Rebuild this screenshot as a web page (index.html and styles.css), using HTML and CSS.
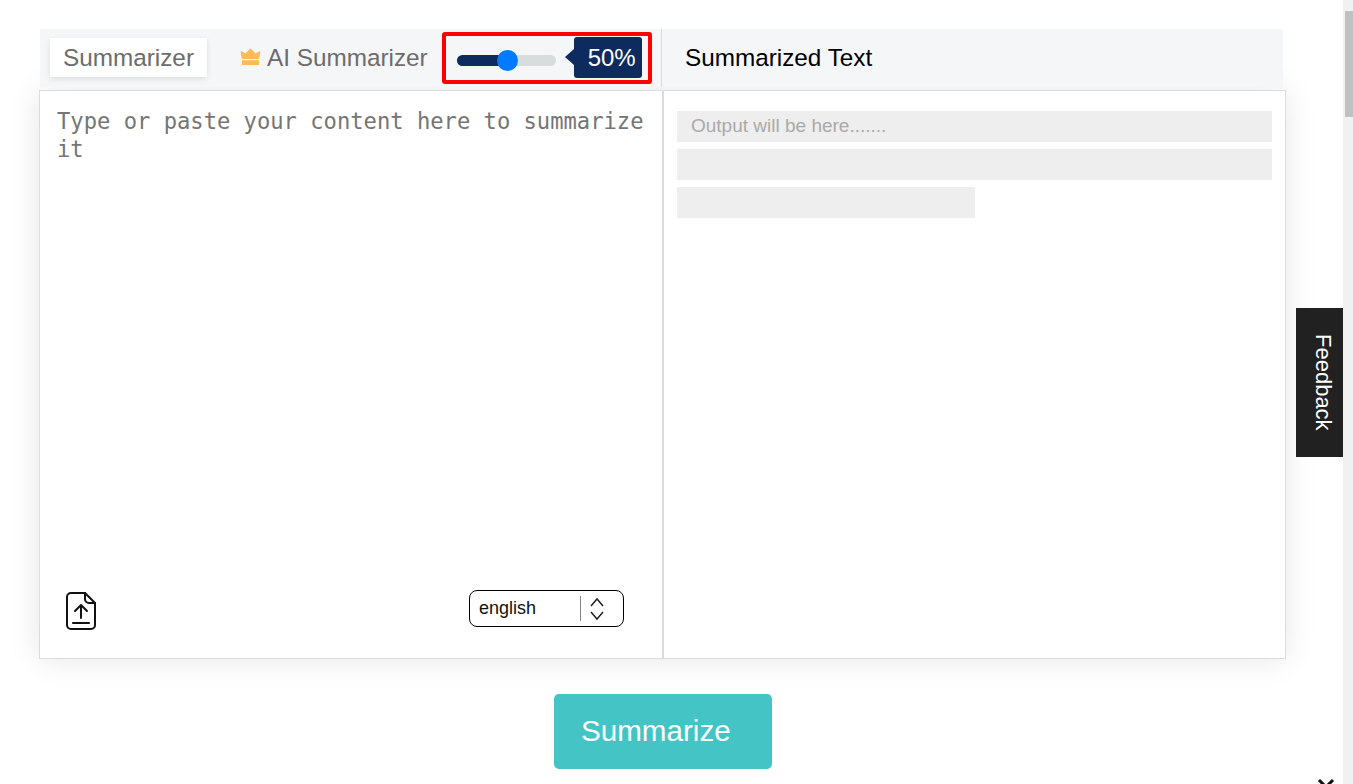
FILE: index.html
```html
<!DOCTYPE html>
<html lang="en">
<head>
    <meta charset="UTF-8">
    <meta name="viewport" content="width=device-width, initial-scale=1.0">
    <title>Summarizer</title>
    <link rel="stylesheet" href="styles.css">
</head>
<body>
    <div class="pagina">
        <main class="contenido">
            <div class="cabecera">
                <div class="cabecera-izq">
                    <button class="tab activo">Summarizer</button>
                    <button class="tab tab-ai">
                        <svg class="corona" viewBox="0 0 21 17" width="21" height="17">
                            <path fill="#fdbb56" stroke="#fdbb56" stroke-linejoin="round" d="M1 3.5 L5.5 6 L10.5 0.8 L15.5 6 L20 3.5 L18.7 10.5 H2.3 Z"/>
                            <rect fill="#fdbb56" x="2" y="12.2" width="17" height="4.8"/>
                        </svg>
                        AI Summarizer
                    </button>
                    <div class="resaltado">
                        <div class="slider">
                            <div class="slider-lleno"></div>
                            <div class="slider-bola"></div>
                        </div>
                        <div class="porcentaje">50%</div>
                    </div>
                </div>
                <div class="cabecera-der">Summarized Text</div>
            </div>

            <div class="tarjeta">
                <div class="panel-izq">
                    <div class="placeholder">Type or paste your content here to summarize it</div>
                    <div class="panel-pie">
                        <svg class="icono-archivo" viewBox="0 0 30 38" width="30" height="38" fill="none" stroke="#111" stroke-width="2" stroke-linecap="round" stroke-linejoin="round">
                            <path d="M5 1 H19 L29 11 V33 A4 4 0 0 1 25 37 H5 A4 4 0 0 1 1 33 V5 A4 4 0 0 1 5 1 Z"/>
                            <path d="M19 1 V7 A4 4 0 0 0 23 11 H29"/>
                            <path d="M15 26 V13 M9 19 L15 13 L21 19"/>
                            <path d="M7 31 H23"/>
                        </svg>
                        <div class="selector">
                            <span class="selector-texto">english</span>
                            <span class="selector-linea"></span>
                            <svg class="selector-flechas" viewBox="0 0 14 24" width="14" height="24" fill="none" stroke="#222" stroke-width="1.5">
                                <path d="M1 9 L7 2 L13 9"/>
                                <path d="M1 15 L7 22 L13 15"/>
                            </svg>
                        </div>
                    </div>
                </div>
                <div class="panel-der">
                    <div class="linea-salida">Output will be here.......</div>
                    <div class="linea-salida"></div>
                    <div class="linea-salida corta"></div>
                </div>
            </div>

            <div class="acciones">
                <button class="btn-resumir">Summarize</button>
            </div>
        </main>
        <div class="barra-scroll">
            <div class="barra-thumb"></div>
        </div>

        <div class="feedback"><span>Feedback</span></div>
        <svg class="cerrar" viewBox="0 0 18 18" width="18" height="18" stroke="#111" stroke-width="3">
            <path d="M2 2 L16 16 M16 2 L2 16"/>
        </svg>
    </div>
</body>
</html>
```

FILE: styles.css
```css
html, body {
    margin: 0;
    height: 100%;
    overflow: hidden;
    background: white;
    font-family: "Liberation Sans", Arial, sans-serif;
}

.pagina {
    position: relative;
    display: flex;
    height: 784px;
    overflow: hidden;
}

.contenido {
    width: 1343px;
    box-sizing: border-box;
    padding: 29px 0 0 40px;
}

.barra-scroll {
    width: 10px;
    background: #f1f1f1;
    padding-top: 11px;
}

.barra-thumb {
    width: 8px;
    height: 106px;
    margin-left: 2px;
    background: #c1c1c1;
}

.cabecera {
    position: relative;
    z-index: 1;
    display: flex;
    width: 1243px;
    height: 58px;
    background: #f5f6f8;
}

.cabecera-izq {
    display: flex;
    align-items: flex-start;
    width: 622px;
    box-sizing: border-box;
    padding: 3px 0 0 10px;
    border-right: 1px solid #dcdcdc;
}

.cabecera-der {
    padding-left: 23px;
    font-size: 24.3px;
    line-height: 58px;
    color: #000;
}

.tab {
    border: none;
    background: none;
    font-family: inherit;
    font-size: 24.3px;
    color: #6c6c6c;
    height: 39px;
    padding: 0;
    margin-top: 6px;
}

.tab.activo {
    width: 157px;
    background: white;
    box-shadow: 0 2px 6px rgba(0, 0, 0, 0.1);
}

.tab-ai {
    display: flex;
    align-items: center;
    gap: 6px;
    margin-left: 33px;
}

.corona {
    margin-top: -3px;
}

.resaltado {
    display: flex;
    align-items: center;
    width: 210px;
    height: 52px;
    box-sizing: border-box;
    margin-left: 14px;
    padding-left: 11px;
    border: 4px solid red;
    border-radius: 3px;
}

.slider {
    position: relative;
    width: 99px;
    height: 11px;
    margin-top: 5px;
    border-radius: 6px;
    background: #d7dddd;
}

.slider-lleno {
    width: 50px;
    height: 11px;
    border-radius: 6px 0 0 6px;
    background: #0d2b5e;
}

.slider-bola {
    position: absolute;
    left: 40px;
    top: -5px;
    width: 21px;
    height: 21px;
    border-radius: 50%;
    background: #007bff;
}

.porcentaje {
    position: relative;
    width: 68px;
    height: 41px;
    margin: -1px 0 0 18px;
    border-radius: 3px;
    background: #0d2b5e;
    color: white;
    font-size: 24px;
    line-height: 41px;
    text-align: right;
    padding-right: 6px;
    box-sizing: border-box;
}

.porcentaje::before {
    content: "";
    position: absolute;
    left: -9px;
    top: 12px;
    border-style: solid;
    border-width: 8px 9px 8px 0;
    border-color: transparent #0d2b5e transparent transparent;
}

.tarjeta {
    display: flex;
    width: 1247px;
    height: 569px;
    box-sizing: border-box;
    margin: 3px 0 0 -1px;
    border: 1px solid #dcdcdc;
    box-shadow: 0 0 30px rgba(0, 0, 0, 0.1);
    background: white;
}

.panel-izq {
    display: flex;
    flex-direction: column;
    justify-content: space-between;
    width: 624px;
    box-sizing: border-box;
    padding: 16px 10px 28px 17px;
    border-right: 2px solid #dcdcdc;
}

.placeholder {
    font-family: "DejaVu Sans Mono", monospace;
    font-size: 22.15px;
    line-height: 28px;
    color: #757575;
}

.panel-pie {
    display: flex;
    justify-content: space-between;
    align-items: flex-start;
    padding: 0 28px 0 9px;
}

.icono-archivo {
    margin-top: 2px;
}

.selector {
    display: flex;
    align-items: center;
    width: 155px;
    height: 37px;
    box-sizing: border-box;
    padding-left: 9px;
    border: 1px solid #000;
    border-radius: 8px;
    font-size: 18px;
    color: #111;
}

.selector-texto {
    width: 101px;
}

.selector-linea {
    width: 1px;
    height: 25px;
    background: #888;
}

.selector-flechas {
    margin-left: 9px;
}

.panel-der {
    flex: 1;
    display: flex;
    flex-direction: column;
    gap: 7px;
    padding: 20px 13px 0 13px;
}

.linea-salida {
    height: 31px;
    padding-left: 14px;
    background: #eee;
    font-size: 19px;
    line-height: 30px;
    color: #aaa;
}

.linea-salida.corta {
    width: 284px;
}

.acciones {
    display: flex;
    justify-content: flex-start;
    padding: 35px 0 0 514px;
}

.btn-resumir {
    width: 218px;
    height: 75px;
    border: none;
    border-radius: 5px;
    padding: 0 0 2px 27px;
    background: #44c4c4;
    color: white;
    font-family: inherit;
    font-size: 29.6px;
    text-align: left;
}

.feedback {
    position: absolute;
    left: 1296px;
    top: 308px;
    display: flex;
    justify-content: center;
    align-items: center;
    width: 47px;
    height: 149px;
    box-sizing: border-box;
    padding-left: 6px;
    background: #212121;
    color: white;
    font-size: 22px;
}

.feedback span {
    writing-mode: vertical-rl;
}

.cerrar {
    position: absolute;
    left: 1317px;
    top: 778px;
}
```
